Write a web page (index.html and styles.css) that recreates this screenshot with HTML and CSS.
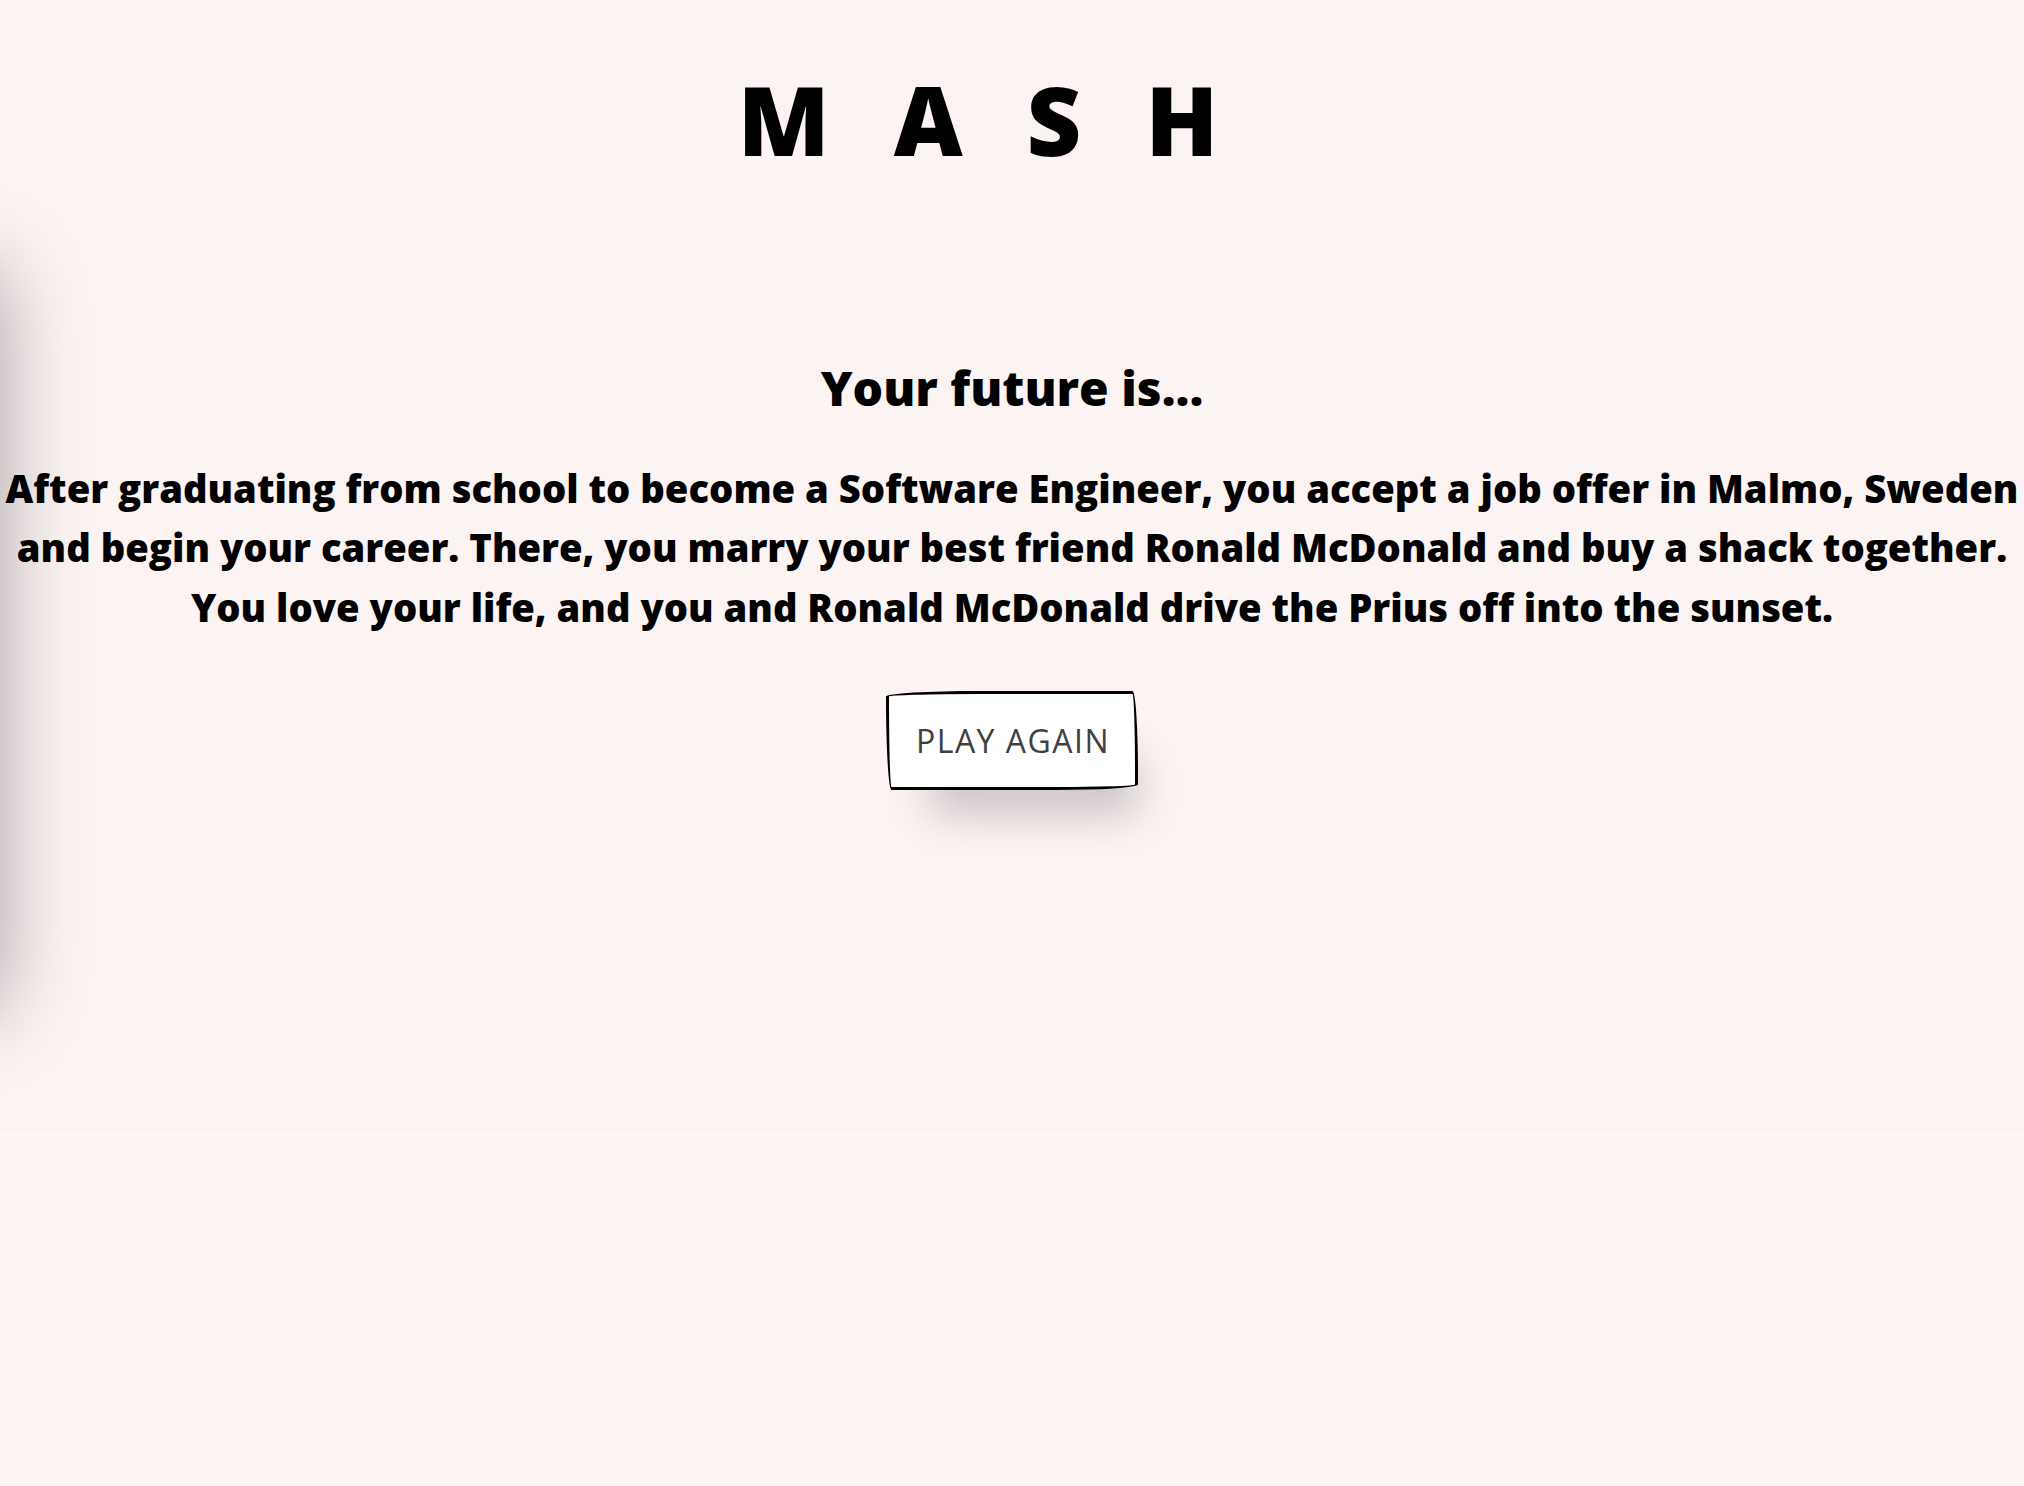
FILE: index.html
```html
<!DOCTYPE html>
<html lang="en">
<head>
<meta charset="utf-8">
<title>MASH</title>
<link rel="stylesheet" href="styles.css">
</head>
<body>
<div class="page">
  <div class="drawer" aria-hidden="true"></div>
  <header class="header">
    <h1 class="logo">MASH</h1>
  </header>
  <main class="result">
    <h2 class="result-title">Your future is...</h2>
    <p class="result-text">After graduating from school to become a Software Engineer, you accept a job offer in Malmo, Sweden<br>and begin your career. There, you marry your best friend Ronald McDonald and buy a shack together.<br>You love your life, and you and Ronald McDonald drive the Prius off into the sunset.</p>
    <button class="btn" type="button">PLAY AGAIN</button>
  </main>
</div>
</body>
</html>
```
FILE: styles.css
```css
html, body {
  margin: 0;
  padding: 0;
}
body {
  background: #fff5f4;
  font-family: "Open Sans", "Liberation Sans", sans-serif;
  color: #000;
}
.page {
  position: relative;
  min-height: 1131px;
  background: #fcf3f3;
  text-align: center;
  overflow: hidden;
}
.drawer {
  position: absolute;
  left: -400px;
  top: 270px;
  width: 400px;
  height: 740px;
  background: #fff;
  box-shadow: 0 0 80px rgba(0, 0, 0, 0.33);
}
.header {
  padding-top: 72px;
}
.logo {
  margin: 0;
  font-size: 95px;
  line-height: 95px;
  font-weight: 800;
  letter-spacing: 64px;
  padding-right: 4px;
}
.result {
  padding-top: 196px;
}
.result-title {
  margin: 0;
  font-size: 48px;
  line-height: 49px;
  font-weight: 800;
}
.result-text {
  margin: 47px 0 0;
  font-size: 38.2px;
  line-height: 59.4px;
  font-weight: 800;
  white-space: nowrap;
}
.btn {
  margin-top: 54px;
  font-family: "Open Sans", "Liberation Sans", sans-serif;
  font-size: 32px;
  line-height: 31px;
  font-weight: 400;
  letter-spacing: 1.5px;
  color: #41403e;
  background: #fff;
  border: 3px solid #000;
  padding: 31px 25px 31px 27px;
  border-top-left-radius: 255px 15px;
  border-top-right-radius: 15px 225px;
  border-bottom-right-radius: 225px 15px;
  border-bottom-left-radius: 15px 255px;
  box-shadow: 22px 46px 44px -22px rgba(0, 0, 0, 0.2);
  cursor: pointer;
}
```
